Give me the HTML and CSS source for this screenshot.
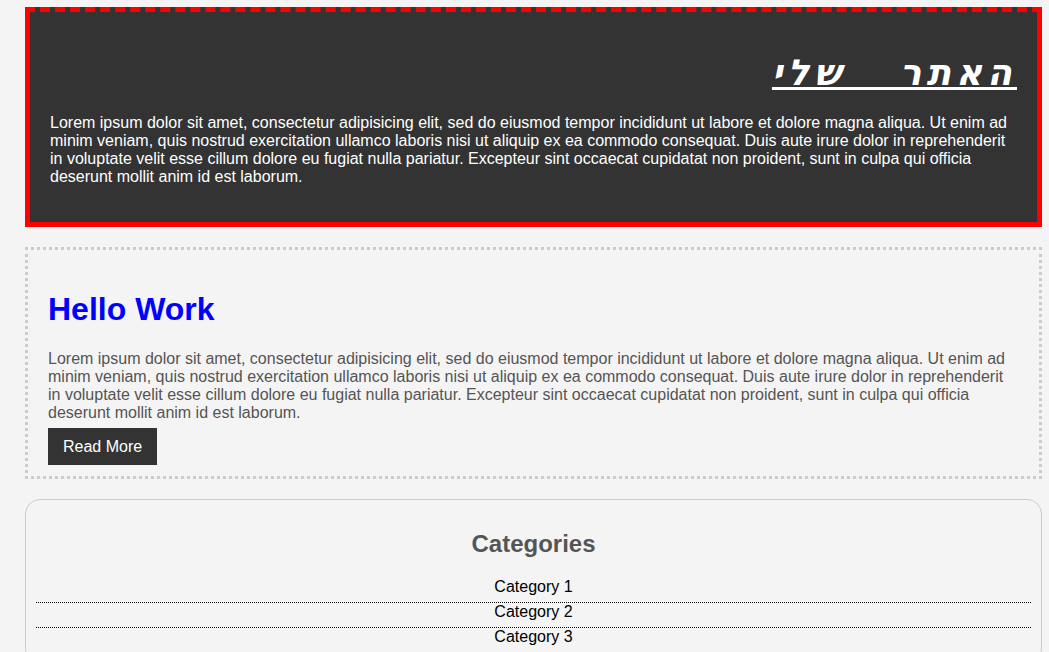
FILE: index.html
```html
<!DOCTYPE html>
<html lang="he">
<head>
<meta charset="utf-8">
<title>האתר שלי</title>
<link rel="stylesheet" href="styles.css">
</head>
<body>
<div class="page">
  <header class="site-header">
    <h1 class="site-title" dir="rtl">האתר שלי</h1>
    <p class="header-text">Lorem ipsum dolor sit amet, consectetur adipisicing elit, sed do eiusmod tempor incididunt ut labore et dolore magna aliqua. Ut enim ad minim veniam, quis nostrud exercitation ullamco laboris nisi ut aliquip ex ea commodo consequat. Duis aute irure dolor in reprehenderit in voluptate velit esse cillum dolore eu fugiat nulla pariatur. Excepteur sint occaecat cupidatat non proident, sunt in culpa qui officia deserunt mollit anim id est laborum.</p>
  </header>
  <section class="post">
    <h1 class="post-title">Hello Work</h1>
    <p class="post-text">Lorem ipsum dolor sit amet, consectetur adipisicing elit, sed do eiusmod tempor incididunt ut labore et dolore magna aliqua. Ut enim ad minim veniam, quis nostrud exercitation ullamco laboris nisi ut aliquip ex ea commodo consequat. Duis aute irure dolor in reprehenderit in voluptate velit esse cillum dolore eu fugiat nulla pariatur. Excepteur sint occaecat cupidatat non proident, sunt in culpa qui officia deserunt mollit anim id est laborum.</p>
    <a class="btn" href="#">Read More</a>
  </section>
  <aside class="categories">
    <h2 class="categories-title">Categories</h2>
    <ul class="cat-list">
      <li class="cat-item">Category 1</li>
      <li class="cat-item">Category 2</li>
      <li class="cat-item">Category 3</li>
    </ul>
  </aside>
</div>
</body>
</html>
```
FILE: styles.css
```css
html, body {
  margin: 0;
  padding: 0;
  background: #f4f4f4;
  font-family: "Liberation Sans", Arial, sans-serif;
  font-size: 16px;
}

.page {
  padding: 7px 7px 0 25px;
}

.site-header {
  background: #333333;
  color: #ffffff;
  border: 5px solid #ff0000;
  border-top-style: dashed;
  padding: 20px;
}

.site-title {
  margin: 21.44px 0;
  font-family: "DejaVu Sans", "Liberation Sans", sans-serif;
  font-size: 36px;
  line-height: 39px;
  font-style: italic;
  font-weight: bold;
  text-align: right;
  text-decoration: underline;
  letter-spacing: 5px;
  word-spacing: 36px;
}

.header-text {
  margin: 16px 0;
}

.post {
  margin-top: 20px;
  border: 3px dotted #cccccc;
  padding: 20px;
  color: #555555;
}

.post-title {
  margin: 0.67em 0;
  font-size: 32px;
  color: #0000ff;
}

.post-text {
  margin: 16px 0;
}

.btn {
  background: #333333;
  color: #ffffff;
  text-decoration: none;
  padding: 10px 15px;
}

.categories {
  margin-top: 20px;
  border: 1px solid #cccccc;
  border-radius: 15px;
  padding: 10px;
  text-align: center;
}

.categories-title {
  margin: 0.83em 0;
  font-size: 24px;
  color: #555555;
}

.cat-list {
  list-style: none;
  margin: 0;
  padding: 0;
}

.cat-item {
  line-height: 18px;
  padding-bottom: 6px;
  border-bottom: 1px dotted #000000;
  color: #000000;
}
```
